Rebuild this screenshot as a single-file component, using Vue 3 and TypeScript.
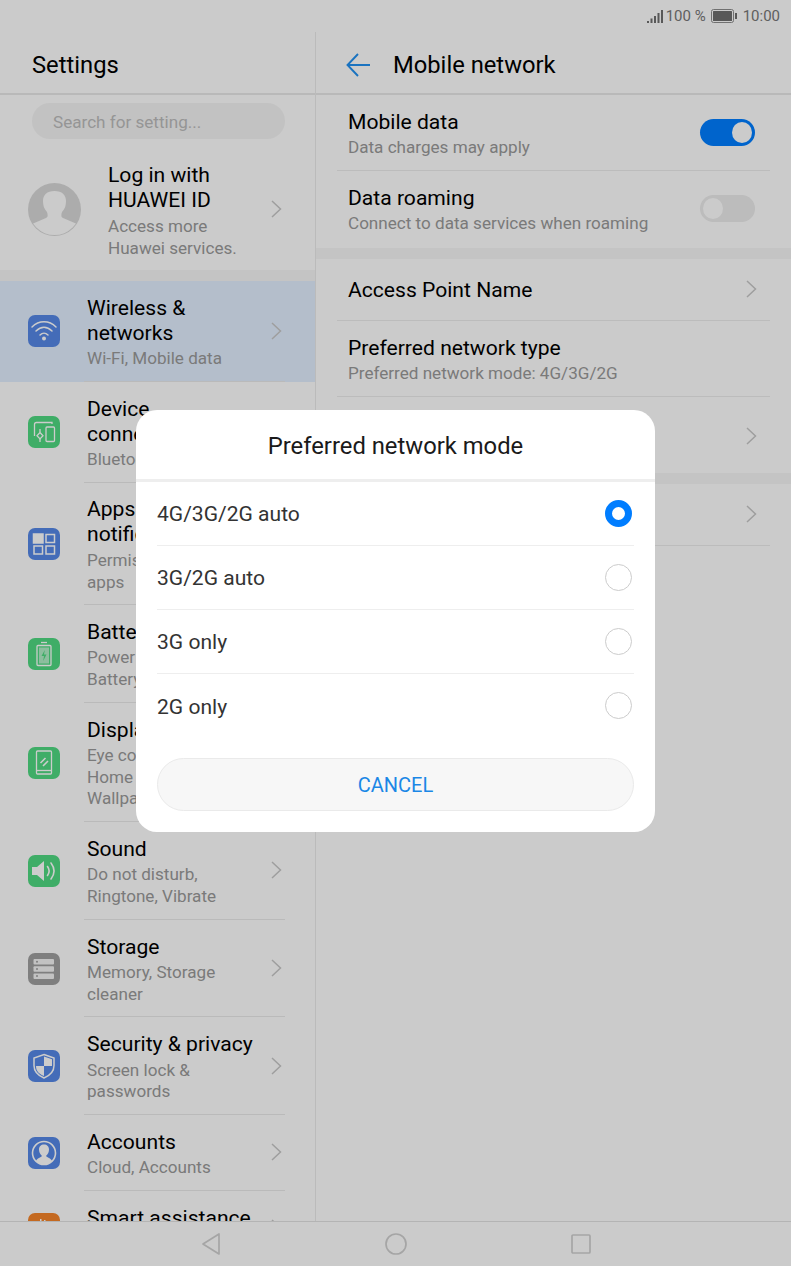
<script setup lang="ts">
type Item = { id: string; color: string; title: string[]; sub: string[]; active?: boolean }

const items: Item[] = [
  { id: 'wifi', color: '#5688e6', title: ['Wireless &', 'networks'], sub: ['Wi-Fi, Mobile data'], active: true },
  { id: 'device', color: '#4fd981', title: ['Device', 'connectivity'], sub: ['Bluetooth, NFC'] },
  { id: 'apps', color: '#5688e6', title: ['Apps &', 'notifications'], sub: ['Permissions, Default', 'apps'] },
  { id: 'battery', color: '#4fd981', title: ['Battery'], sub: ['Power saving mode,', 'Battery usage'] },
  { id: 'display', color: '#4fd981', title: ['Display'], sub: ['Eye comfort,', 'Home screen &', 'Wallpaper'] },
  { id: 'sound', color: '#4fd981', title: ['Sound'], sub: ['Do not disturb,', 'Ringtone, Vibrate'] },
  { id: 'storage', color: '#9f9f9f', title: ['Storage'], sub: ['Memory, Storage', 'cleaner'] },
  { id: 'shield', color: '#5688e6', title: ['Security & privacy'], sub: ['Screen lock &', 'passwords'] },
  { id: 'account', color: '#5688e6', title: ['Accounts'], sub: ['Cloud, Accounts'] },
  { id: 'smart', color: '#f58428', title: ['Smart assistance'], sub: [] },
]

const modes = [
  { label: '4G/3G/2G auto', on: true },
  { label: '3G/2G auto', on: false },
  { label: '3G only', on: false },
  { label: '2G only', on: false },
]
</script>

<template>
  <div class="screen">
    <div class="status">
      <svg class="signal" width="17" height="15" viewBox="0 0 17 15">
        <rect x="0" y="12" width="2" height="2" />
        <rect x="3.5" y="9.5" width="2" height="4.5" />
        <rect x="7" y="7" width="2" height="7" />
        <rect x="10.5" y="4" width="2" height="10" />
        <rect x="14" y="1" width="2" height="13" />
      </svg>
      <span class="pct">100 %</span>
      <svg class="batt" width="26" height="14" viewBox="0 0 26 14">
        <rect x="0.5" y="0.5" width="22" height="13" rx="2" fill="none" stroke="#8c8c8c" />
        <rect x="2" y="2" width="19" height="10" rx="0.5" fill="#6e6e6e" />
        <rect x="24" y="4" width="2" height="6" fill="#6e6e6e" />
      </svg>
      <span class="time">10:00</span>
    </div>

    <div class="main">
      <aside class="left">
        <header class="head"><h1>Settings</h1></header>
        <div class="search">Search for setting...</div>
        <div class="list">
          <div class="profile">
            <svg class="avatar" width="53" height="53" viewBox="0 0 53 53">
              <circle cx="26.5" cy="26.5" r="26.5" fill="#d8d8d8" />
              <clipPath id="ac"><circle cx="26.5" cy="26.5" r="25.6" /></clipPath>
              <g clip-path="url(#ac)">
                <path d="M4 41l14-6c2-1 2-3 1-6-3-3-4-7-4-11 0-6 4-10 11.500-10S38 12 38 18c0 4-1 8-4 11-1 3-1 5 1 6l14 6v12H4z" fill="#fefefe" />
              </g>
            </svg>
            <div class="text">
              <div class="t">Log in with</div>
              <div class="t">HUAWEI ID</div>
              <div class="s first">Access more</div>
              <div class="s">Huawei services.</div>
            </div>
            <svg class="chev" width="11" height="18" viewBox="0 0 11 18"><path d="M1 1l8.500 8-8.500 8" /></svg>
          </div>
          <div class="band"></div>

          <div v-for="item in items" :key="item.id" class="item" :class="{ active: item.active }">
            <svg class="ico" width="32" height="32" viewBox="0 0 32 32">
              <rect width="32" height="32" rx="7" :fill="item.color" />
              <g v-if="item.id === 'wifi'" fill="none" stroke="#fff" stroke-width="1.500" stroke-linecap="round">
                <path d="M4 12c7-7 17-7 24 0" />
                <path d="M8 16c5-5 11-5 16 0" />
                <path d="M12 20c2.500-2.500 5.500-2.500 8 0" />
                <circle cx="16" cy="23.500" r="2" fill="#fff" stroke="none" />
              </g>
              <g v-else-if="item.id === 'device'" fill="none" stroke="#fff" stroke-width="1.300">
                <path d="M24 8V6.500H8.500a2 2 0 0 0-2 2V20" />
                <rect x="18" y="11" width="8.500" height="14.500" rx="1" />
                <path d="M12 13v3M12 23v3" />
                <path d="M12 16.500l3 3.200-3 3.200-3-3.200z" />
              </g>
              <g v-else-if="item.id === 'apps'" fill="none" stroke="#fff" stroke-width="1.500">
                <rect x="5.500" y="6" width="9.500" height="9" fill="#fff" />
                <rect x="18" y="6.500" width="8.500" height="8" />
                <rect x="6" y="18" width="8.500" height="8" />
                <rect x="18" y="18" width="8.500" height="8" />
              </g>
              <g v-else-if="item.id === 'battery'" fill="none" stroke="#fff" stroke-width="1.300">
                <path d="M13 4.500h6" />
                <rect x="9" y="7.500" width="14" height="20" rx="1" />
                <rect x="11" y="9.500" width="10" height="16" fill="#fff" fill-opacity=".55" stroke="none" />
                <path d="M16.800 12l-3.300 6h2.500l-.800 5 3.300-6.500h-2.500z" :fill="item.color" stroke="none" />
              </g>
              <g v-else-if="item.id === 'display'" fill="none" stroke="#fff" stroke-width="1.300">
                <rect x="8.500" y="4" width="15" height="23" rx="1" />
                <path d="M8.500 23.500h15" />
                <path d="M12.500 16l5-5M15 19l5-5" stroke-width="1.600" />
              </g>
              <g v-else-if="item.id === 'sound'">
                <path d="M4 12h5l7-6v20l-7-6H4z" fill="#fff" />
                <path d="M19.500 11.500c2.200 3 2.200 6 0 9M23 8c3.800 5 3.800 11 0 16" fill="none" stroke="#fff" stroke-width="1.600" stroke-linecap="round" />
              </g>
              <g v-else-if="item.id === 'storage'" fill="#fff">
                <rect x="5.500" y="6" width="20.500" height="5.500" rx="1" opacity=".88" />
                <rect x="5.500" y="13.200" width="20.500" height="5.500" rx="1" opacity=".88" />
                <rect x="5.500" y="20.400" width="20.500" height="5.500" rx="1" opacity=".88" />
                <circle cx="9" cy="8.700" r="1" fill="#9f9f9f" />
                <circle cx="9" cy="16" r="1" fill="#9f9f9f" />
                <circle cx="9" cy="23.100" r="1" fill="#9f9f9f" />
              </g>
              <g v-else-if="item.id === 'shield'">
                <path d="M16 4.500l10 3.500v7.500c0 6-4 10-10 12.500-6-2.500-10-6.500-10-12.500V8z" fill="none" stroke="#fff" stroke-width="1.500" />
                <path d="M16 6.500L24 9.300V16h-8zM16 16H8c0 5 3 8 8 10z" fill="#fff" />
              </g>
              <g v-else-if="item.id === 'account'">
                <circle cx="16" cy="16" r="11.500" fill="none" stroke="#fff" stroke-width="1.600" />
                <path d="M8 24c1-3 5-3.500 6-5-2-2-3-4-3-6.500 0-3 2-5 5-5s5 2 5 5c0 2.500-1 4.500-3 6.500 1 1.500 5 2 6 5-4 4.500-12 4.500-16 0z" fill="#fff" />
              </g>
              <g v-else fill="#fff">
                <rect x="8" y="9" width="1.500" height="8" />
                <rect x="12" y="6" width="1.500" height="12" />
                <rect x="16" y="7" width="1.500" height="10" />
                <rect x="20" y="8" width="1.500" height="9" />
              </g>
            </svg>
            <div class="body">
              <div class="text">
                <div v-for="l in item.title" :key="l" class="t">{{ l }}</div>
                <div v-for="(l, i) in item.sub" :key="l" class="s" :class="{ first: i === 0 }">{{ l }}</div>
              </div>
              <svg class="chev" width="11" height="18" viewBox="0 0 11 18"><path d="M1 1l8.500 8-8.500 8" /></svg>
            </div>
          </div>
        </div>
      </aside>

      <section class="right">
        <header class="head">
          <svg class="back" width="25" height="24" viewBox="0 0 25 24" fill="none" stroke="#2190f0" stroke-width="1.900">
            <path d="M12 1L1.500 12 12 23M1.500 12H24" />
          </svg>
          <h1>Mobile network</h1>
        </header>

        <div class="rrow">
          <div class="text">
            <div class="t">Mobile data</div>
            <div class="s first">Data charges may apply</div>
          </div>
          <div class="toggle on"><i></i></div>
        </div>
        <div class="rrow last">
          <div class="text">
            <div class="t">Data roaming</div>
            <div class="s first">Connect to data services when roaming</div>
          </div>
          <div class="toggle"><i></i></div>
        </div>
        <div class="band"></div>
        <div class="rrow single">
          <div class="t">Access Point Name</div>
          <svg class="chev" width="11" height="18" viewBox="0 0 11 18"><path d="M1 1l8.500 8-8.500 8" /></svg>
        </div>
        <div class="rrow">
          <div class="text">
            <div class="t">Preferred network type</div>
            <div class="s first">Preferred network mode: 4G/3G/2G</div>
          </div>
        </div>
        <div class="rrow last hidden-row">
          <div class="text"></div>
          <svg class="chev" width="11" height="18" viewBox="0 0 11 18"><path d="M1 1l8.500 8-8.500 8" /></svg>
        </div>
        <div class="band"></div>
        <div class="rrow single">
          <div class="t"></div>
          <svg class="chev" width="11" height="18" viewBox="0 0 11 18"><path d="M1 1l8.500 8-8.500 8" /></svg>
        </div>
      </section>
    </div>

    <nav class="nav">
      <svg width="20" height="24" viewBox="0 0 20 24" fill="none" stroke="#cfcfcf" stroke-width="1.700"><path d="M18 2v20L2 12z" stroke-linejoin="round" /></svg>
      <svg width="22" height="22" viewBox="0 0 22 22" fill="none" stroke="#cfcfcf" stroke-width="1.700"><circle cx="11" cy="11" r="10" /></svg>
      <svg width="20" height="20" viewBox="0 0 20 20" fill="none" stroke="#cfcfcf" stroke-width="1.700"><rect x="1" y="1" width="18" height="18" rx="1" /></svg>
    </nav>

    <div class="scrim">
      <div class="dialog">
        <div class="dtitle">Preferred network mode</div>
        <div v-for="(m, i) in modes" :key="m.label" class="mode" :class="{ end: i === modes.length - 1 }">
          <span>{{ m.label }}</span>
          <span class="radio" :class="{ on: m.on }"></span>
        </div>
        <div class="cancel">CANCEL</div>
      </div>
    </div>
  </div>
</template>

<style scoped>
.screen {
  position: relative;
  width: 791px;
  height: 1266px;
  display: flex;
  flex-direction: column;
  overflow: hidden;
  background: #fefefe;
  color: #000;
  font-family: Roboto, "Liberation Sans", sans-serif;
}
.status {
  height: 32px;
  flex: none;
  display: flex;
  align-items: center;
  justify-content: flex-end;
  padding-right: 11px;
  font-size: 15px;
  color: #777;
}
.signal { fill: #6e6e6e; margin-right: 2px; }
.pct { margin-right: 5px; }
.batt { margin-right: 6px; }
.main { flex: 1; min-height: 0; display: flex; }
.left {
  width: 315px;
  flex: none;
  display: flex;
  flex-direction: column;
  border-right: 1.500px solid #eaeaea;
}
.right { flex: 1; min-width: 0; display: flex; flex-direction: column; }
.head {
  height: 63px;
  flex: none;
  box-sizing: border-box;
  padding-top: 4px;
  display: flex;
  align-items: center;
  border-bottom: 2.500px solid #e8e8e8;
}
.head h1 { margin: 0; font-size: 23.750px; font-weight: 400; }
.left .head { padding-left: 32px; }
.right .head { padding-left: 30px; }
.back { margin-right: 22px; }
.search {
  flex: none;
  height: 36px;
  margin: 8px 30px 0 32px;
  padding-left: 21px;
  border-radius: 18px;
  background: #f3f3f3;
  color: #bbb;
  font-size: 17.100px;
  line-height: 38px;
}
.list { flex: 1; min-height: 0; overflow: hidden; }
.profile {
  display: flex;
  align-items: center;
  height: 131px;
  box-sizing: border-box;
  padding: 9px 33px 0 28px;
}
.avatar { flex: none; margin-right: 27px; }
.profile .text { flex: 1; margin-top: 3.500px; }
.profile .s.first { margin-top: 3.750px; }
.band { height: 11px; flex: none; background: #f5f5f5; }
.t { font-size: 21.100px; line-height: 25px; }
.s { font-size: 17.100px; line-height: 21.750px; color: #999; }
.s.first { margin-top: 3.350px; }
.chev { flex: none; fill: none; stroke: #c6c6c6; stroke-width: 1.500; }
.item { display: flex; padding-left: 28px; }
.item.active { background: #e2eefe; }
.ico { flex: none; align-self: center; margin-right: 24px; }
.body {
  flex: 1;
  min-width: 0;
  min-height: 50.100px;
  display: flex;
  align-items: center;
  justify-content: space-between;
  margin-right: 30px;
  padding: 13.750px 3px 11px 0;
  border-bottom: 1px solid #e9e9e9;
}
.body .text { padding-left: 3px; align-self: flex-start; }
.body .chev { margin-bottom: 3px; }
.rrow {
  display: flex;
  align-items: center;
  justify-content: space-between;
  margin: 0 21px;
  padding: 14px 13px 10.900px 11px;
  border-bottom: 1px solid #ececec;
}
.rrow.last { border-bottom: 0; padding-bottom: 12.900px; }
.rrow.single { height: 62px; box-sizing: border-box; padding-top: 0; padding-bottom: 0; }
.hidden-row { height: 76px; box-sizing: border-box; }
.toggle {
  width: 55px;
  height: 27px;
  box-sizing: border-box;
  border-radius: 14px;
  padding: 3px;
  background: #ebebeb;
  margin: 0 1px 3px -1px;
  display: flex;
  transform: translateX(-1px);
}
.toggle i { width: 20px; height: 21px; border-radius: 50%; background: #fefefe; }
.toggle.on { background: #007dff; justify-content: flex-end; }
.nav {
  height: 45px;
  flex: none;
  box-sizing: border-box;
  border-top: 1px solid #e2e2e2;
  display: flex;
  align-items: center;
  justify-content: center;
  gap: 164px;
}
.scrim {
  position: absolute;
  inset: 0;
  background: rgba(0, 0, 0, 0.2);
  display: flex;
  justify-content: center;
  align-items: flex-start;
  padding-top: 410px;
}
.dialog {
  width: 519px;
  height: 422px;
  box-sizing: border-box;
  background: #fff;
  border-radius: 21px;
  padding: 0 21px;
}
.dtitle {
  height: 72px;
  box-sizing: border-box;
  margin: 0 -21px;
  border-bottom: 3px solid #eee;
  text-align: center;
  font-size: 23.800px;
  line-height: 72px;
  color: #1a1a1a;
}
.mode {
  height: 64px;
  box-sizing: border-box;
  display: flex;
  align-items: center;
  justify-content: space-between;
  border-bottom: 1px solid #eee;
  font-size: 21.050px;
  color: #333;
  padding-right: 2px;
}
.mode.end { border-bottom: 0; }
.radio {
  width: 27px;
  height: 27px;
  box-sizing: border-box;
  border-radius: 50%;
  border: 1.500px solid #ccc;
  margin-top: -1px;
}
.radio.on { border: 7px solid #007dff; }
.cancel {
  margin-top: 20px;
  height: 53px;
  box-sizing: border-box;
  border: 1px solid #eaeaea;
  border-radius: 27px;
  background: #f7f7f7;
  color: #1b87e6;
  text-align: center;
  font-size: 20px;
  line-height: 52px;
}
</style>
